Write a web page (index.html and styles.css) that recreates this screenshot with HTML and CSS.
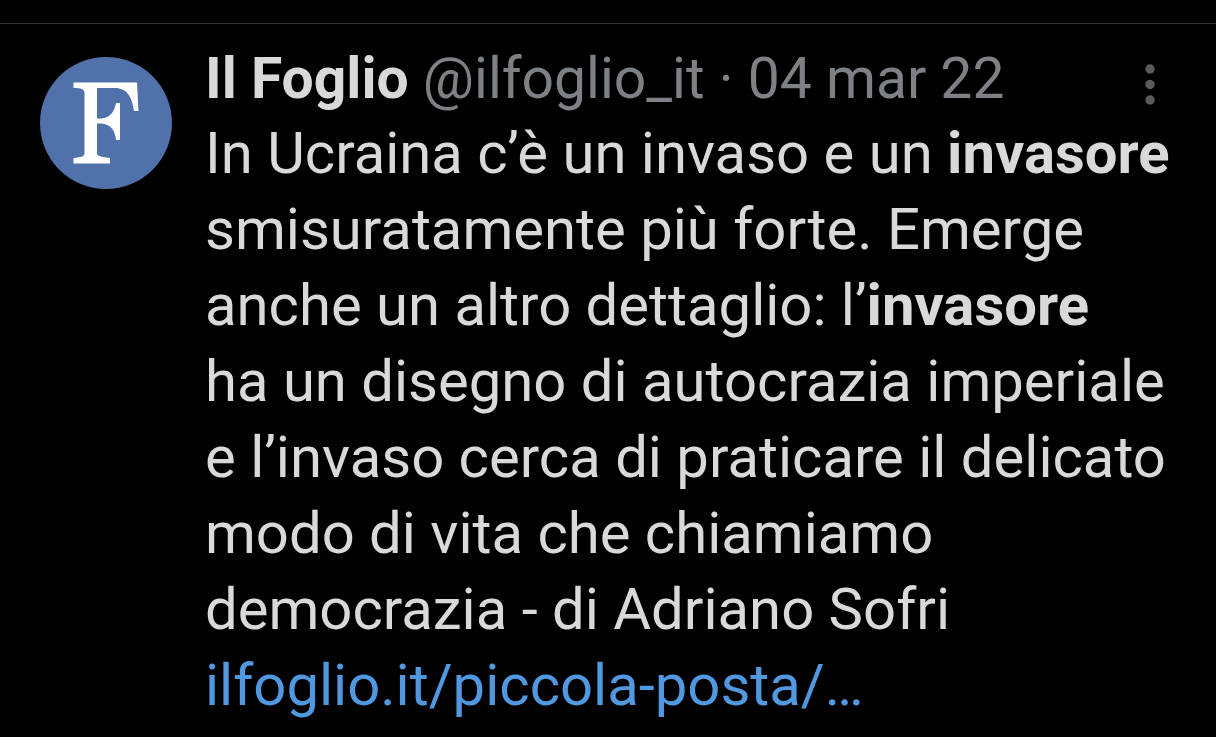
FILE: index.html
```html
<!DOCTYPE html>
<html lang="it">
<head>
<meta charset="utf-8">
<meta name="viewport" content="width=device-width, initial-scale=1">
<title>Il Foglio</title>
<link rel="stylesheet" href="styles.css">
</head>
<body>
<article class="post">
  <svg class="avatar" viewBox="0 0 132 132" role="img" aria-label="Il Foglio">
    <circle cx="66" cy="66" r="66" fill="#5071a9"/>
    <path fill="#fff" d="M33.500 25.500H97L98.500 54H94C92 40 87 31 75 31H57V61.500H62C71 60 74 55 76 46H80V83H76C75 73 71 68 62 66.500H57V96C57 99 61 100 70 101V106.500H33.500V101C41 100 44.500 100 44.500 96V36C44.500 32 41 31 33.500 31Z"/>
  </svg>
  <div class="content">
    <header class="head">
      <div class="meta"><strong class="name">Il Foglio</strong> <span class="handle">@ilfoglio_it · 04 mar 22</span></div>
      <button class="more" type="button" aria-label="Altro">
        <svg class="dots" viewBox="0 0 12 42"><circle cx="6" cy="6" r="4.700"/><circle cx="6" cy="21.500" r="4.700"/><circle cx="6" cy="37" r="4.700"/></svg>
      </button>
    </header>
    <p class="text">In Ucraina c’è un invaso e un <b>invasore</b><br>smisuratamente più forte. Emerge<br>anche un altro dettaglio: l’<b>invasore</b><br>ha un disegno di autocrazia imperiale<br>e l’invaso cerca di praticare il delicato<br>modo di vita che chiamiamo<br>democrazia - di Adriano Sofri<br><a class="link" href="#">ilfoglio.it/piccola-posta/…</a></p>
  </div>
</article>
</body>
</html>
```
FILE: styles.css
```css
body {
  margin: 0;
  background: #000;
  color: #d9d9d9;
  font-family: Roboto, sans-serif;
}
.post {
  display: flex;
  gap: 33px;
  margin-top: 23px;
  padding: 19px 40px 0;
  border-top: 1px solid #2f3336;
}
.avatar {
  flex: none;
  width: 132px;
  height: 132px;
  margin-top: 14px;
}
.content {
  flex: 1;
  min-width: 0;
}
.head {
  display: flex;
  justify-content: space-between;
  font-size: 57px;
  line-height: 72px;
  white-space: nowrap;
}
.name {
  font-weight: 700;
}
.handle {
  color: #7d8085;
}
.more {
  display: flex;
  align-items: center;
  padding: 10px 20px 0;
  border: 0;
  background: none;
}
.dots {
  width: 12px;
  height: 42px;
  fill: #5b5b5d;
}
.text {
  margin: 0;
  font-size: 58px;
  line-height: 76px;
  white-space: nowrap;
}
.link {
  color: #5098e0;
  text-decoration: none;
}
```
